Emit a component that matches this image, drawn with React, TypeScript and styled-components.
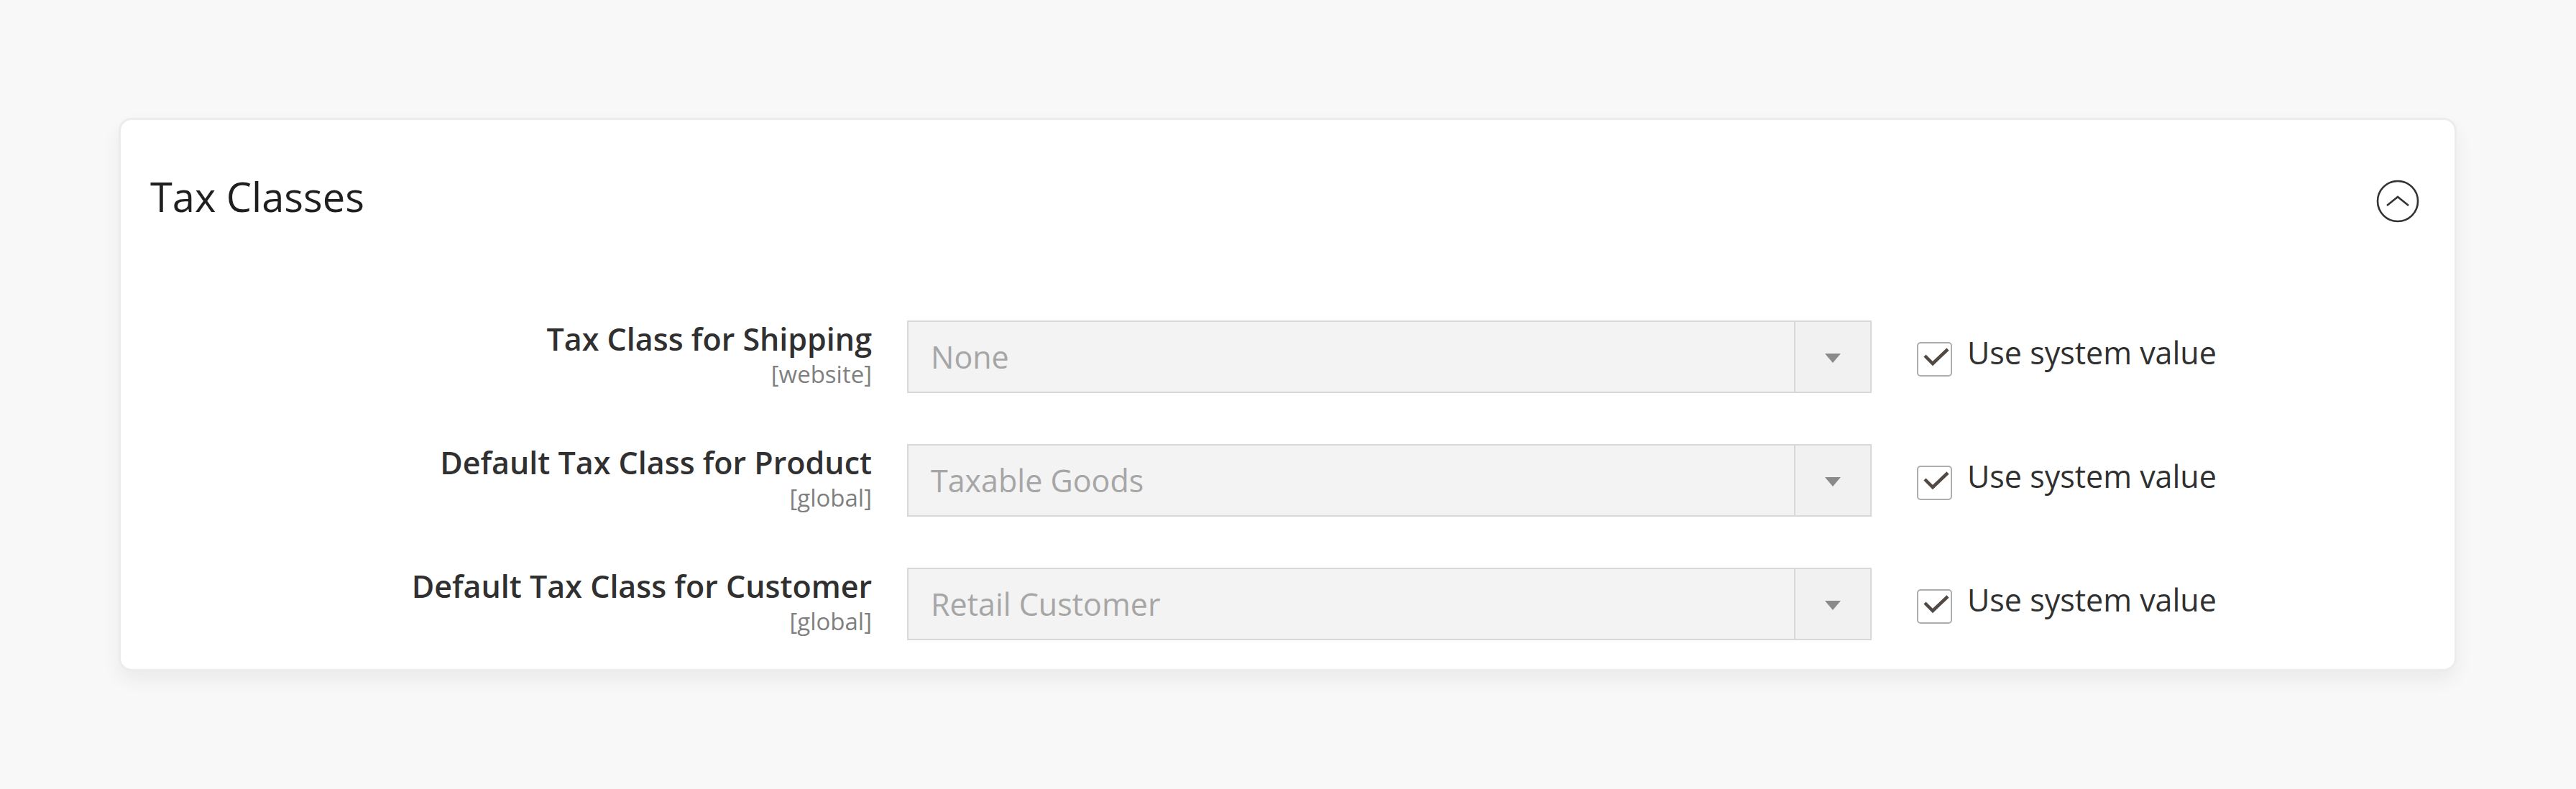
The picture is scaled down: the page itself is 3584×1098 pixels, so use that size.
import React from "react";
import styled, { createGlobalStyle } from "styled-components";

const GlobalStyle = createGlobalStyle`
  html, body {
    margin: 0;
    padding: 0;
    background: #f8f8f8;
  }
  body {
    font-family: "Open Sans", "Noto Sans", sans-serif;
    color: #303030;
  }
`;

const Page = styled.div`
  min-height: 1098px;
  box-sizing: border-box;
  padding: 164px 0 0 165px;
`;

const Card = styled.section`
  width: 3253px;
  box-sizing: border-box;
  background: #ffffff;
  border: 3px solid #ececec;
  border-radius: 18px;
  box-shadow: 0 12px 26px rgba(0, 0, 0, 0.06);
  padding: 73px 49px 40px 0;
`;

const Header = styled.header`
  display: flex;
  align-items: flex-start;
  justify-content: space-between;
  padding-left: 41px;
`;

const Title = styled.h2`
  margin: 0;
  font-size: 56px;
  line-height: 66px;
  font-weight: 400;
  color: #1f1f1f;
`;

const CollapseButton = styled.button`
  margin-top: 10px;
  width: 60px;
  height: 60px;
  padding: 0;
  border: none;
  background: transparent;
  display: flex;
  align-items: center;
  justify-content: center;
  cursor: pointer;
`;

const Form = styled.div`
  margin-top: 136px;
  display: flex;
  flex-direction: column;
  gap: 71px;
`;

const Row = styled.div`
  display: flex;
  align-items: flex-start;
`;

const LabelCol = styled.div`
  width: 1045px;
  flex-shrink: 0;
  text-align: right;
`;

const LabelText = styled.div`
  font-size: 43px;
  line-height: 52px;
  font-weight: 600;
  color: #303030;
`;

const Scope = styled.div`
  font-size: 33px;
  line-height: 45px;
  color: #808080;
`;

const Select = styled.div`
  margin-left: 49px;
  width: 1342px;
  height: 101px;
  box-sizing: border-box;
  flex-shrink: 0;
  border: 2px solid #d8d8d8;
  background: #f3f3f3;
  display: flex;
`;

const SelectValue = styled.div`
  flex: 1;
  display: flex;
  align-items: center;
  padding-left: 31px;
  font-size: 43px;
  color: #a6a6a6;
`;

const SelectArrow = styled.div`
  width: 104px;
  border-left: 2px solid #d8d8d8;
  background: #f1f1f1;
  display: flex;
  align-items: center;
  justify-content: center;
  &::after {
    content: "";
    margin-top: 4px;
    border-left: 11px solid transparent;
    border-right: 11px solid transparent;
    border-top: 13px solid #8a8a8a;
  }
`;

const CheckField = styled.label`
  margin-left: 63px;
  padding-top: 30px;
  display: flex;
  align-items: flex-start;
  gap: 21px;
`;

const CheckBox = styled.span`
  width: 49px;
  height: 48px;
  box-sizing: border-box;
  border: 2px solid #adadad;
  border-radius: 5px;
  background: #ffffff;
  display: block;
  flex-shrink: 0;
`;

const CheckLabel = styled.span`
  margin-top: -14px;
  font-size: 43px;
  line-height: 58px;
  color: #303030;
  white-space: nowrap;
`;

const rows = [
  { label: "Tax Class for Shipping", scope: "[website]", value: "None" },
  { label: "Default Tax Class for Product", scope: "[global]", value: "Taxable Goods" },
  { label: "Default Tax Class for Customer", scope: "[global]", value: "Retail Customer" },
];

export default function App() {
  return (
    <>
      <GlobalStyle />
      <Page>
        <Card>
          <Header>
            <Title>Tax Classes</Title>
            <CollapseButton aria-label="Collapse">
              <svg width="60" height="60" viewBox="0 0 60 60" fill="none">
                <circle cx="30" cy="30" r="28" stroke="#333" strokeWidth="2.6" />
                <path d="M15 36 L30 24 L45 36" stroke="#333" strokeWidth="2.6" strokeLinejoin="miter" />
              </svg>
            </CollapseButton>
          </Header>
          <Form>
            {rows.map((r) => (
              <Row key={r.label}>
                <LabelCol>
                  <LabelText>{r.label}</LabelText>
                  <Scope>{r.scope}</Scope>
                </LabelCol>
                <Select>
                  <SelectValue>{r.value}</SelectValue>
                  <SelectArrow />
                </Select>
                <CheckField>
                  <CheckBox>
                    <svg width="45" height="44" viewBox="0 0 45 44" fill="none">
                      <path d="M9 17 L20 28 L41 8" stroke="#514943" strokeWidth="4.5" />
                    </svg>
                  </CheckBox>
                  <CheckLabel>Use system value</CheckLabel>
                </CheckField>
              </Row>
            ))}
          </Form>
        </Card>
      </Page>
    </>
  );
}
